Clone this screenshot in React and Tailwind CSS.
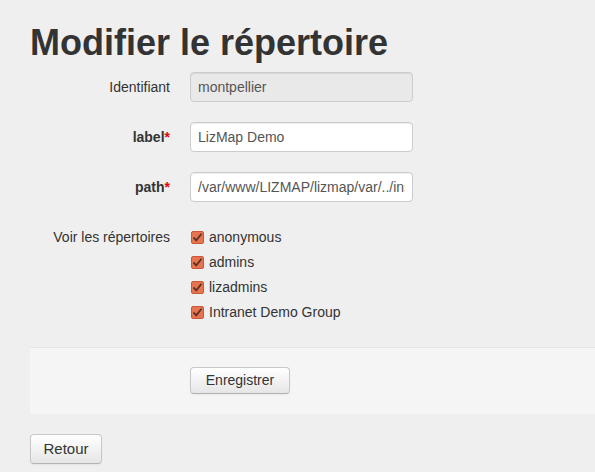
import { useState } from 'react';

const groups = ['anonymous', 'admins', 'lizadmins', 'Intranet Demo Group'];

function Check({ label }) {
  return (
    <label className="flex items-center h-[20px] leading-[20px]">
      <span className="w-[13px] h-[13px] mr-[5px] ml-[1px] rounded-[2px] bg-[#e8734f] border border-[#c9573a] flex items-center justify-center">
        <svg width="11" height="11" viewBox="0 0 11 11">
          <path d="M1.5 5.5 L4.3 8.3 L9.5 1.8" fill="none" stroke="#5a3326" strokeWidth="1.8" />
        </svg>
      </span>
      <span>{label}</span>
    </label>
  );
}

function Row({ label, required, children, bold }) {
  return (
    <div className="flex mb-[20px]">
      <div className={`w-[140px] text-right pt-[5px] leading-[20px] ${bold ? 'font-bold' : ''}`}>
        {label}
        {required && <span className="text-[#e00]">*</span>}
      </div>
      <div className="ml-[20px]">{children}</div>
    </div>
  );
}

export default function App() {
  const [label, setLabel] = useState('LizMap Demo');
  const [path, setPath] = useState('/var/www/LIZMAP/lizmap/var/../install/qgis/');

  return (
    <div className="min-h-[472px] bg-[#efefef] text-[#333] text-[14px] pt-[23px] pb-[8px] overflow-hidden" style={{ fontFamily: '"Liberation Sans", Arial, sans-serif' }}>
      <div className="pl-[30px]">
        <h1 className="text-[36px] leading-[40px] font-bold text-[#333] mb-[9px]">Modifier le répertoire</h1>

        {/* Form */}
        <Row label="Identifiant">
          <div className="w-[223px] h-[30px] px-[7px] leading-[28px] border border-[#ccc] rounded-[4px] bg-[#e9e9e9] text-[#555] shadow-[inset_0_1px_1px_rgba(0,0,0,0.075)]">
            montpellier
          </div>
        </Row>
        <Row label="label" required bold>
          <input
            className="w-[223px] h-[30px] px-[7px] border border-[#ccc] rounded-[4px] bg-white text-[#555] shadow-[inset_0_1px_1px_rgba(0,0,0,0.075)] outline-none"
            value={label}
            onChange={(e) => setLabel(e.target.value)}
          />
        </Row>
        <Row label="path" required bold>
          <input
            className="w-[223px] h-[30px] px-[7px] border border-[#ccc] rounded-[4px] bg-white text-[#555] shadow-[inset_0_1px_1px_rgba(0,0,0,0.075)] outline-none"
            value={path}
            onChange={(e) => setPath(e.target.value)}
          />
        </Row>
        <div className="flex">
          <div className="w-[140px] text-right pt-[5px] leading-[20px]">Voir les répertoires</div>
          <div className="ml-[20px] pt-[5px] flex flex-col gap-[5px]">
            {groups.map((g) => (
              <Check key={g} label={g} />
            ))}
          </div>
        </div>

        {/* Actions */}
        <div className="mt-[25px] bg-[#f5f5f5] border-t border-[#e5e5e5] pt-[19px] pb-[20px] pl-[160px]">
          <button className="h-[27px] w-[100px] rounded-[4px] border border-[#c8c8c8] border-b-[#b3b3b3] bg-gradient-to-b from-white to-[#e6e6e6] text-[#333] shadow-[inset_0_1px_0_rgba(255,255,255,0.2),0_1px_2px_rgba(0,0,0,0.05)]">
            Enregistrer
          </button>
        </div>

        <div className="mt-[20px]">
          <button className="h-[30px] w-[72px] rounded-[4px] border border-[#c8c8c8] border-b-[#b3b3b3] bg-gradient-to-b from-white to-[#e6e6e6] text-[#333] text-[15px] shadow-[inset_0_1px_0_rgba(255,255,255,0.2),0_1px_2px_rgba(0,0,0,0.05)]">
            Retour
          </button>
        </div>
      </div>
    </div>
  );
}
